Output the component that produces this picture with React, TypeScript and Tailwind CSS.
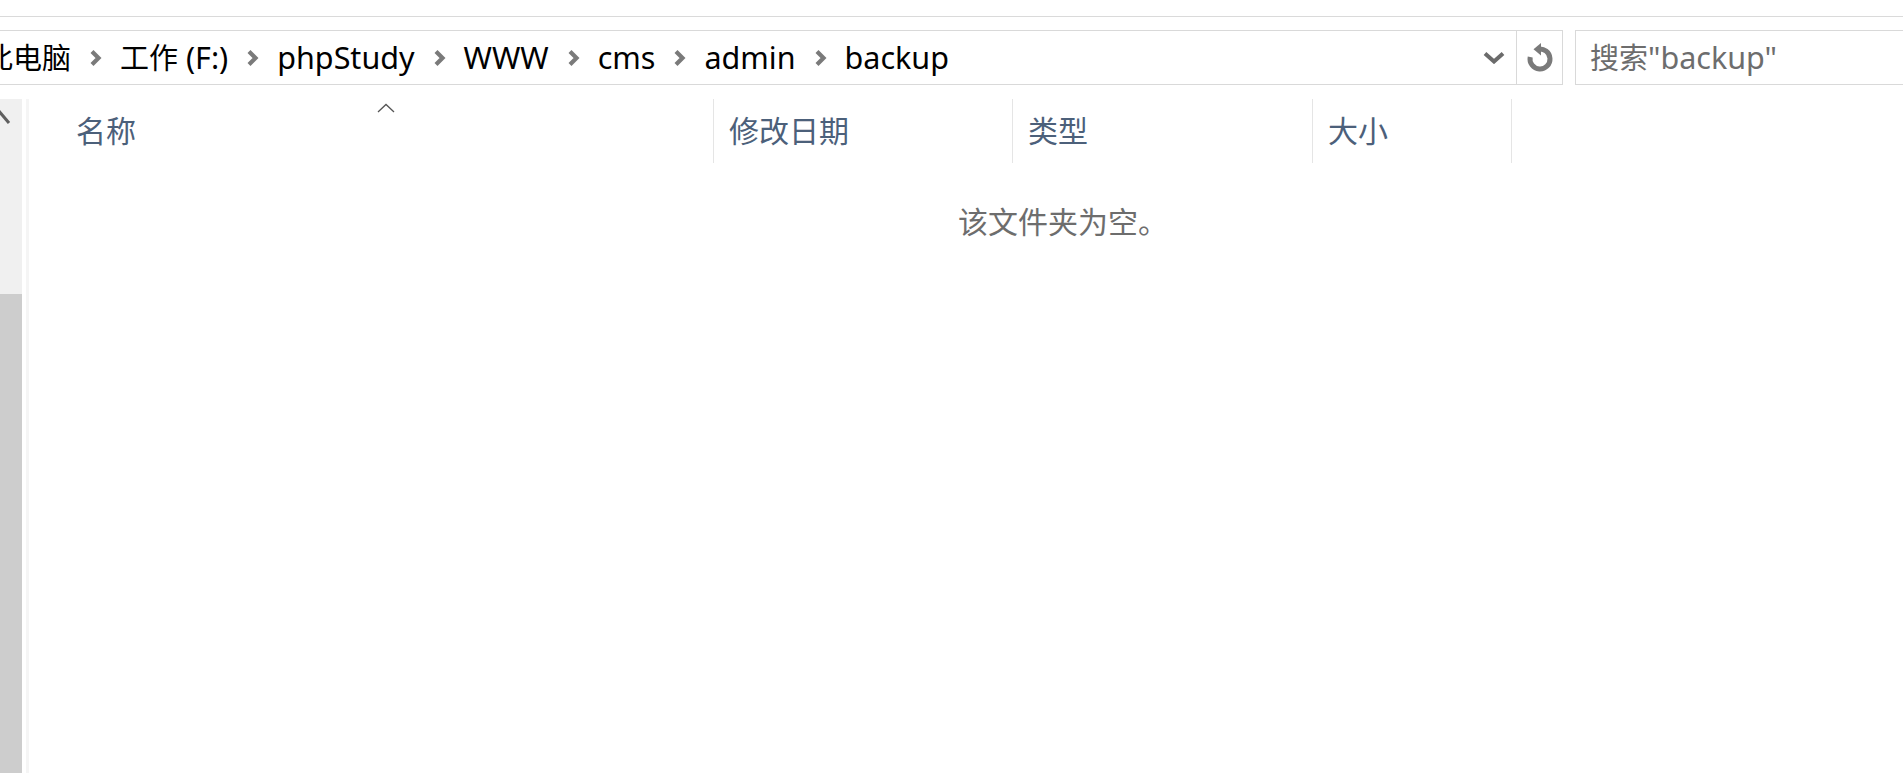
import { Fragment } from 'react'

const CRUMBS = ['此电脑', '工作 (F:)', 'phpStudy', 'WWW', 'cms', 'admin', 'backup']

const COLUMNS = [
  { label: '名称', w: 'w-[684px]', pad: 'pl-[47px]', sort: true },
  { label: '修改日期', w: 'w-[299px]', pad: 'pl-[15px]' },
  { label: '类型', w: 'w-[300px]', pad: 'pl-[15px]' },
  { label: '大小', w: 'w-[200px]', pad: 'pl-[15px]' },
]

// latin runs come out a little narrow next to the CJK glyphs, so bump them
function Mixed({ text }: { text: string }) {
  const parts = text.split(/([\u3000-\u9fff]+)/).filter(Boolean)
  return (
    <>
      {parts.map((p, i) =>
        /[\u3000-\u9fff]/.test(p) ? (
          <span key={i} className="text-[29px]">{p}</span>
        ) : (
          <span key={i} className="text-[30.5px]">{p}</span>
        ),
      )}
    </>
  )
}

function Chevron() {
  return (
    <svg viewBox="0 0 13 18" className="h-[18px] w-[13px] shrink-0" aria-hidden="true">
      <path d="M3 2.5 9.5 9 3 15.5" fill="none" stroke="#7a7a7a" strokeWidth="4.2" />
    </svg>
  )
}

function DropIcon() {
  return (
    <svg viewBox="0 0 22 13" className="h-[13px] w-[22px]" aria-hidden="true">
      <path d="M2 2.5 11 10.5 20 2.5" fill="none" stroke="#6b6b6b" strokeWidth="4" />
    </svg>
  )
}

function RefreshIcon() {
  return (
    <svg viewBox="0 0 32 32" className="h-[32px] w-[32px]" aria-hidden="true">
      <path d="M14 7.2A10 10 0 1 1 6.2 15" fill="none" stroke="#7a7a7a" strokeWidth="5" />
      <path d="M17 1 9.5 7.2 17 13.4Z" fill="#7a7a7a" />
    </svg>
  )
}

export default function App() {
  return (
    <div className="h-[773px] w-[1903px] overflow-hidden bg-white font-['Noto_Sans','Noto_Sans_CJK_SC',sans-serif]">
      <div className="h-[17px] border-b border-[#dadada]" />
      <div className="mt-[13px] flex h-[55px]">
        <div className="flex h-full w-[1563px] shrink-0 border-y border-r border-[#d9d9d9]">
          <div className="-ml-[16px] flex flex-1 items-center gap-[18px] leading-none text-black">
            {CRUMBS.map((c, i) => (
              <Fragment key={c}>
                {i > 0 && <Chevron />}
                <span className="whitespace-nowrap">
                  <Mixed text={c} />
                </span>
              </Fragment>
            ))}
          </div>
          <div className="flex w-[33px] items-center justify-start">
            <DropIcon />
          </div>
          <div className="flex w-[46px] items-center justify-center border-l border-[#d9d9d9]">
            <RefreshIcon />
          </div>
        </div>
        <div className="ml-[12px] flex h-full flex-1 items-center border-y border-l border-[#d9d9d9] pl-[14px] leading-none text-[#6d6d6d]">
          <Mixed text={'搜索"backup"'} />
        </div>
      </div>

      <div className="mt-[14px] flex h-[674px]">
        <div className="relative flex w-[22px] shrink-0 flex-col">
          <div className="h-[195px] bg-[#f0f0f0]" />
          <div className="flex-1 bg-[#cdcdcd]" />
          <svg viewBox="0 0 12 20" className="absolute left-0 top-[9px] h-[20px] w-[12px]" aria-hidden="true">
            <path d="M-2 2 9 15" stroke="#5f5f5f" strokeWidth="3" />
          </svg>
        </div>
        <div className="ml-[4px] w-[3px] shrink-0 bg-[#f5f5f5]" />
        <div className="flex-1">
          <div className="flex h-[64px]">
            {COLUMNS.map((c, i) => (
              <div
                key={c.label}
                className={`relative flex h-full shrink-0 items-center ${c.w} ${c.pad} ${i > 0 ? 'border-l border-[#e5e5e5]' : ''} ${i === COLUMNS.length - 1 ? 'border-r border-[#e5e5e5]' : ''}`}
              >
                {c.sort && (
                  <svg viewBox="0 0 18 10" className="absolute left-[348px] top-[4px] h-[10px] w-[18px]" aria-hidden="true">
                    <path d="M1 9 9 1.5 17 9" fill="none" stroke="#555" strokeWidth="1.3" />
                  </svg>
                )}
                <span className="text-[30px] leading-none text-[#4c607a]">{c.label}</span>
              </div>
            ))}
          </div>
          <div className="mt-[44px] pl-[929px] text-[30px] leading-none text-[#6d6d6d]">该文件夹为空。</div>
        </div>
      </div>
    </div>
  )
}
